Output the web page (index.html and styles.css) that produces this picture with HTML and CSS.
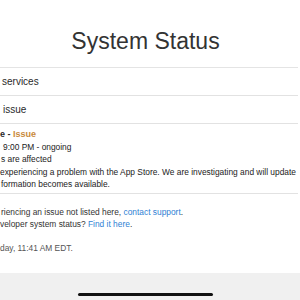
FILE: index.html
```html
<!DOCTYPE html>
<html lang="en">
<head>
  <meta charset="UTF-8">
  <meta name="viewport" content="width=device-width, initial-scale=1.0">
  <title>System Status</title>
  <link rel="stylesheet" href="styles.css">
</head>
<body>
  <div class="screen">
    <main class="page">
      <h1 class="title">System Status</h1>

      <ul class="services">
        <li class="row">services</li>
        <li class="row row-issue">issue</li>
        <li class="incident">
          <p class="incident-head">e - <span class="issue">Issue</span></p>
          <p class="line line-time">9:00 PM - ongoing</p>
          <p class="line line-users">s are affected</p>
          <p class="line">experiencing a problem with the App Store. We are investigating and will update</p>
          <p class="line line-info">formation becomes available.</p>
        </li>
      </ul>

      <div class="notes">
        <p class="note note-first">riencing an issue not listed here, <a href="#">contact support</a>.</p>
        <p class="note">veloper system status? <a href="#">Find it here</a>.</p>
        <p class="note updated">day, 11:41 AM EDT.</p>
      </div>
    </main>

    <div class="home-bar">
      <span class="indicator"></span>
    </div>
  </div>
</body>
</html>
```

FILE: styles.css
```css
* {
  box-sizing: border-box;
}
body {
  margin: 0;
  font-family: 'Liberation Sans', Arial, sans-serif;
  color: #333;
  background: #fff;
}
.screen {
  display: flex;
  flex-direction: column;
  height: 300px;
  width: 300px;
  overflow: hidden;
}
.page {
  flex: 1;
  overflow: hidden;
  white-space: nowrap;
}
.title {
  margin: 0;
  padding: 28px 9px 13px 0; /* page is cut a bit off-centre */
  font-size: 23px;
  line-height: 26px;
  font-weight: normal;
  text-align: center;
  color: #333;
}
.services {
  list-style: none;
  margin: 0 2px 0 0;
  padding: 0;
  border-top: 1px solid #e4e4e4;
}
.row {
  height: 28px;
  line-height: 27px;
  padding-left: 2px;
  font-size: 10px;
  color: #2a2a2a;
  border-bottom: 1px solid #e2e2e2;
}
.row-issue {
  padding-left: 3px;
}
.incident {
  padding: 4px 0 2.5px;
  border-bottom: 1px solid #e2e2e2;
}
.incident p {
  margin: 0;
}
.incident-head {
  font-size: 9px;
  line-height: 12.5px;
  font-weight: bold;
  color: #2a2a2a;
}
.issue {
  color: #c98a3c;
}
.line {
  font-size: 8.4px;
  line-height: 12.5px;
  color: #222;
}
.line-time {
  padding-left: 3px;
}
.line-users,
.line-info {
  padding-left: 1px;
}
.notes {
  padding-top: 12px;
}
.note {
  margin: 0;
  font-size: 8.4px;
  line-height: 12px;
  color: #333;
}
.note-first {
  padding-left: 1px;
}
.note a {
  color: #2f7fd4;
  text-decoration: none;
}
.updated {
  margin-top: 12px;
  color: #555;
}
.home-bar {
  height: 27px;
  flex-shrink: 0;
  padding-top: 20px;
  background: #f0f0f0;
}
.indicator {
  display: block;
  width: 135px;
  height: 3px;
  margin-left: 78px;
  border-radius: 2px;
  background: #111;
}
```
